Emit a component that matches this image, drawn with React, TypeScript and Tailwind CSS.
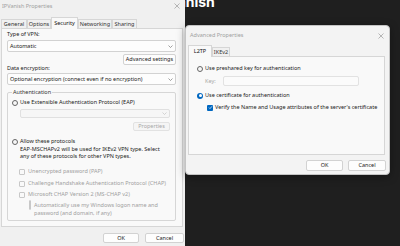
import React from 'react';

const ui = "font-['Noto_Sans',_'Open_Sans',_sans-serif]";

const Chevron = ({ light }: { light?: boolean }) => (
  <svg width="5" height="3" viewBox="0 0 5 3" className="shrink-0">
    <path d="M0.5 0.5 L2.5 2.5 L4.5 0.5" fill="none" stroke={light ? '#c4c4c4' : '#777'} strokeWidth="0.7" />
  </svg>
);

const CloseX = () => (
  <svg width="6" height="6" viewBox="0 0 6 6">
    <path d="M0.5 0.5 L5.5 5.5 M5.5 0.5 L0.5 5.5" stroke="#9a9a9a" strokeWidth="0.7" />
  </svg>
);

const Radio = ({ on }: { on?: boolean }) =>
  on ? (
    <span className="w-[6px] h-[6px] rounded-full bg-[#0067c0] flex items-center justify-center shrink-0">
      <span className="w-[3px] h-[3px] rounded-full bg-white" />
    </span>
  ) : (
    <span className="w-[6px] h-[6px] rounded-full border-[0.7px] border-[#666] bg-[#f7f7f7] shrink-0" />
  );

const Check = ({ on, dim }: { on?: boolean; dim?: boolean }) =>
  on ? (
    <span className="w-[6px] h-[6px] rounded-[1px] bg-[#0067c0] flex items-center justify-center shrink-0">
      <svg width="5" height="5" viewBox="0 0 5 5">
        <path d="M1 2.6 L2 3.6 L4 1.3" fill="none" stroke="white" strokeWidth="0.7" />
      </svg>
    </span>
  ) : (
    <span className={`w-[6px] h-[6px] rounded-[1px] border-[0.7px] shrink-0 ${dim ? 'border-[#c8c8c8]' : 'border-[#777]'}`} />
  );

const Btn = ({ label, w, dim }: { label: string; w: string; dim?: boolean }) => (
  <div
    className={`${w} h-full flex items-center justify-center rounded-[2px] border-[0.7px] ${
      dim ? 'border-[#e2e2e2] bg-[#f5f5f5] text-[#a8a8a8]' : 'border-[#d2d2d2] bg-[#fdfdfd] text-[#222]'
    }`}
  >
    {label}
  </div>
);

const Tab = ({ label, w, active }: { label: string; w: string; active?: boolean }) => (
  <div
    className={`${w} flex items-center justify-center border-[0.7px] border-b-0 border-[#d6d6d6] ${
      active ? 'h-[12px] bg-[#f9f9f9] -mb-[1px] relative z-10 text-[#111]' : 'h-[9px] bg-[#f0f0f0] text-[#333]'
    }`}
  >
    {label}
  </div>
);

const IPVanishWindow = () => (
  <div className="absolute left-0 top-0 w-[185px] h-[246px] bg-[#f0f0f0] flex flex-col">
    <div className="h-[17px] flex items-start justify-between pl-[2px] pr-[5px] pt-[3px]">
      <span className="text-[#a0a0a0] leading-[7px]">IPVanish Properties</span>
      <CloseX />
    </div>
    <div className="h-[11px] flex items-end pl-[1px]">
      <Tab label="General" w="w-[26px]" />
      <Tab label="Options" w="w-[24px]" />
      <Tab label="Security" w="w-[27px]" active />
      <Tab label="Networking" w="w-[34px]" />
      <Tab label="Sharing" w="w-[25px]" />
    </div>
    <div className="ml-[1px] w-[182px] h-[199px] bg-[#f9f9f9] border-[0.7px] border-[#d6d6d6] pl-[5px] flex flex-col text-[#222]">
      <div className="mt-[2px] leading-[7px]">Type of VPN:</div>
      <div className="mt-[2px] w-[169px] h-[12px] bg-[#fdfdfd] border-[0.7px] border-[#d2d2d2] rounded-[2px] flex items-center justify-between px-[2px]">
        <span>Automatic</span>
        <Chevron />
      </div>
      <div className="mt-[2px] w-[169px] h-[11px] flex justify-end">
        <Btn label="Advanced settings" w="w-[53px]" />
      </div>
      <div className="leading-[7px]">Data encryption:</div>
      <div className="mt-[1px] w-[169px] h-[12px] bg-[#fdfdfd] border-[0.7px] border-[#d2d2d2] rounded-[2px] flex items-center justify-between px-[2px]">
        <span>Optional encryption (connect even if no encryption)</span>
        <Chevron />
      </div>

      <div className="mt-[7px] w-[169px] h-[129px] border-[0.7px] border-[#d6d6d6] rounded-[2px] flex flex-col">
        <div className="-mt-[4px] ml-[4px] w-fit px-[1px] bg-[#f9f9f9] leading-[7px] text-[#333]">Authentication</div>
        <div className="mt-[3px] ml-[4px] h-[7px] flex items-center gap-[2px]">
          <Radio />
          <span>Use Extensible Authentication Protocol (EAP)</span>
        </div>
        <div className="mt-[3px] ml-[12px] w-[150px] h-[9px] bg-[#f6f6f6] border-[0.7px] border-[#e0e0e0] rounded-[2px] flex items-center justify-end px-[2px]">
          <Chevron light />
        </div>
        <div className="mt-[4px] ml-[12px] w-[150px] h-[9px] flex justify-end">
          <Btn label="Properties" w="w-[37px]" dim />
        </div>
        <div className="mt-[7px] ml-[4px] h-[7px] flex items-center gap-[2px]">
          <Radio />
          <span>Allow these protocols</span>
        </div>
        <div className="mt-[1px] ml-[12px] leading-[7px]">
          EAP-MSCHAPv2 will be used for IKEv2 VPN type. Select
          <br />
          any of these protocols for other VPN types.
        </div>
        <div className="mt-[8px] ml-[11px] h-[7px] flex items-center gap-[3px] text-[#a0a0a0]">
          <Check dim />
          <span>Unencrypted password (PAP)</span>
        </div>
        <div className="mt-[5px] ml-[11px] h-[7px] flex items-center gap-[3px] text-[#a0a0a0]">
          <Check dim />
          <span>Challenge Handshake Authentication Protocol (CHAP)</span>
        </div>
        <div className="mt-[4px] ml-[11px] h-[7px] flex items-center gap-[3px] text-[#a0a0a0]">
          <Check dim />
          <span>Microsoft CHAP Version 2 (MS-CHAP v2)</span>
        </div>
        <div className="mt-[3px] ml-[21px] flex items-start gap-[3px] text-[#a0a0a0]">
          <span className="mt-[1px]">
            <Check dim />
          </span>
          <span className="leading-[8px]">
            Automatically use my Windows logon name and
            <br />
            password (and domain, if any)
          </span>
        </div>
      </div>
    </div>
    <div className="mt-[6px] h-[10px] flex justify-end gap-[6px] pr-[1px]">
      <Btn label="OK" w="w-[36px]" />
      <Btn label="Cancel" w="w-[39px]" />
    </div>
  </div>
);

const AdvancedDialog = () => (
  <div className="absolute left-[185px] top-[25px] w-[205px] h-[150px] bg-[#f3f3f3] border-[0.7px] border-[#c4c4c4] rounded-[4px] shadow-[0_2px_8px_rgba(0,0,0,0.35)] flex flex-col text-[#222]">
    <div className="h-[19px] flex items-center justify-between pl-[4px] pr-[5px]">
      <span className="text-[#a0a0a0]">Advanced Properties</span>
      <CloseX />
    </div>
    <div className="h-[11px] flex items-end pl-[2px]">
      <Tab label="L2TP" w="w-[24px]" active />
      <Tab label="IKEv2" w="w-[18px]" />
    </div>
    <div className="ml-[2px] w-[197px] h-[99px] bg-[#f9f9f9] border-[0.7px] border-[#d6d6d6] flex flex-col">
      <div className="mt-[8px] ml-[8px] h-[7px] flex items-center gap-[2px]">
        <Radio />
        <span>Use preshared key for authentication</span>
      </div>
      <div className="mt-[4px] ml-[16px] h-[10px] flex items-center">
        <span className="w-[18px] text-[#a8a8a8]">Key:</span>
        <div className="w-[136px] h-full bg-[#fbfbfb] border-[0.7px] border-[#e2e2e2] rounded-[2px]" />
      </div>
      <div className="mt-[6px] ml-[8px] h-[7px] flex items-center gap-[2px]">
        <Radio on />
        <span>Use certificate for authentication</span>
      </div>
      <div className="mt-[5px] ml-[18px] h-[7px] flex items-center gap-[2px]">
        <Check on />
        <span>Verify the Name and Usage attributes of the server&apos;s certificate</span>
      </div>
    </div>
    <div className="mt-[5px] h-[11px] flex justify-end gap-[5px] pr-[3px]">
      <Btn label="OK" w="w-[37px]" />
      <Btn label="Cancel" w="w-[38px]" />
    </div>
  </div>
);

export default function App() {
  return (
    <div className={`relative w-[400px] h-[246px] overflow-hidden bg-[#1f1f1f] text-[5.5px] leading-[7px] ${ui}`}>
      <div className="absolute left-[155px] -top-[6px] text-white font-bold text-[14px] leading-[16px] font-['Inter',_sans-serif]">
        IPVanish
      </div>
      <IPVanishWindow />
      <AdvancedDialog />
    </div>
  );
}
